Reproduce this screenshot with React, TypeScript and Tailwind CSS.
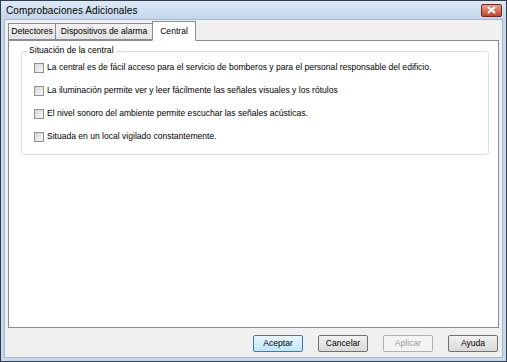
import { useState } from 'react';

const font = { fontFamily: '"Liberation Sans", Arial, sans-serif' };

const items = [
  'La central es de fácil acceso para el servicio de bomberos y para el personal responsable del edificio.',
  'La iluminación permite ver y leer fácilmente las señales visuales y los rótulos',
  'El nivel sonoro del ambiente permite escuchar las señales acústicas.',
  'Situada en un local vigilado constantemente.',
];

function CheckRow({ label }: { label: string }) {
  const [checked, setChecked] = useState(false);
  return (
    <label className="flex items-center gap-[3px] h-[11px] cursor-default" onClick={() => setChecked((c) => !c)}>
      <span className="w-[10px] h-[10px] border border-[#8f8f8f] bg-gradient-to-br from-[#d8d8d8] to-[#f6f6f6] flex items-center justify-center text-[8px] leading-none">
        {checked ? '✓' : ''}
      </span>
      <span className="text-[8.55px] text-black whitespace-nowrap leading-none">{label}</span>
    </label>
  );
}

function DlgButton({ children, primary, disabled }: { children: string; primary?: boolean; disabled?: boolean }) {
  return (
    <button
      type="button"
      className={`w-[50px] h-[17px] rounded-[2px] border text-[8.6px] leading-none flex items-center justify-center ${
        primary
          ? 'border-[#3d7bad] bg-gradient-to-b from-[#eaf6fd] to-[#bee6fd] text-black'
          : disabled
          ? 'border-[#adb2b5] bg-[#f4f4f4] text-[#9a9a9a]'
          : 'border-[#707070] bg-gradient-to-b from-[#f2f2f2] to-[#d9d9d9] text-black'
      }`}
    >
      {children}
    </button>
  );
}

const tabs = [
  { label: 'Detectores', w: 'w-[48px]' },
  { label: 'Dispositivos de alarma', w: 'w-[98px]' },
  { label: 'Central', w: 'w-[44px]' },
];

export default function App() {
  const [tab, setTab] = useState(2);

  return (
    <div style={font} className="w-[507px] h-[362px] flex flex-col bg-[#c6d8ec] border border-[#2f3d4c] overflow-hidden">
      {/* title bar */}
      <div className="h-[18px] flex items-center justify-between pl-[5px] pr-[4px] bg-gradient-to-b from-[#dde9f6] to-[#c3d6ec]">
        <span className="text-[10px] text-black tracking-[0.1px]">Comprobaciones Adicionales</span>
        <button
          type="button"
          className="w-[21px] h-[13px] rounded-[2px] border border-[#6d2a20] bg-gradient-to-b from-[#e4a08f] to-[#c2452c] flex items-center justify-center"
        >
          <svg width="9" height="8" viewBox="0 0 9 8">
            <path d="M1 1 L8 7 M8 1 L1 7" stroke="#fff" strokeWidth="2" />
          </svg>
        </button>
      </div>

      {/* client */}
      <div className="flex-1 mx-[3px] mb-[3px] bg-[#f0f0f0] border border-[#a9b8c8] flex flex-col px-[3px]">
        {/* tab headers */}
        <div className="flex items-end h-[20px]">
          {tabs.map((t, i) => {
            const active = i === tab;
            return (
              <button
                key={t.label}
                type="button"
                onClick={() => setTab(i)}
                className={`${t.w} text-[8.6px] leading-none border border-[#898c95] -ml-px first:ml-0 flex items-center justify-center ${
                  active
                    ? 'h-[20px] bg-white border-b-white relative z-10 -mb-px'
                    : 'h-[17px] bg-gradient-to-b from-[#f2f2f2] to-[#e3e3e3]'
                }`}
              >
                {t.label}
              </button>
            );
          })}
        </div>

        {/* tab panel */}
        <div className="h-[288px] bg-white border border-[#898c95] pl-[12px] pr-[9px] pt-[4px]">
          <div className="border border-[#d5dfe5] rounded-[3px] mt-[6px] h-[104px] relative px-[12px] pt-[10px] flex flex-col gap-[12px]">
            <span className="absolute -top-[6px] left-[5px] bg-white px-[2px] text-[8.6px] leading-none">Situación de la central</span>
            {items.map((it) => (
              <CheckRow key={it} label={it} />
            ))}
          </div>
        </div>

        {/* buttons */}
        <div className="flex-1 flex items-center justify-end gap-[15px] pr-[1px] pt-[2px]">
          <DlgButton primary>Aceptar</DlgButton>
          <DlgButton>Cancelar</DlgButton>
          <DlgButton disabled>Aplicar</DlgButton>
          <DlgButton>Ayuda</DlgButton>
        </div>
      </div>
    </div>
  );
}
